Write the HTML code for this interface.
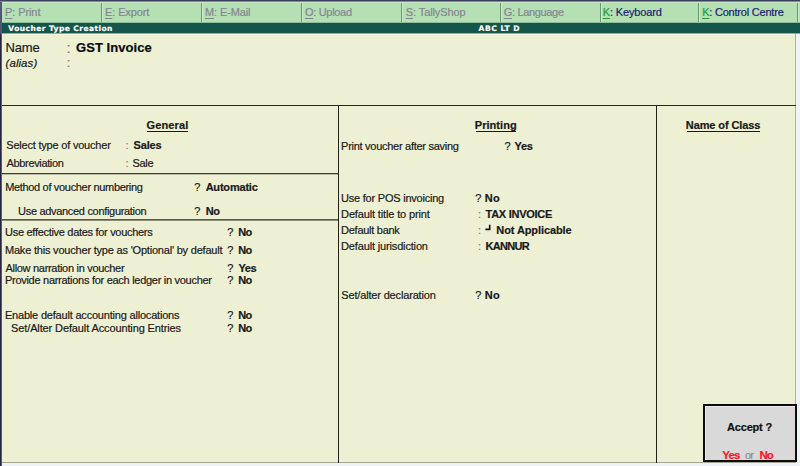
<!DOCTYPE html>
<html>
<head>
<meta charset="utf-8">
<title>Voucher Type Creation</title>
<style>
html,body{margin:0;padding:0;}
body{width:800px;height:466px;overflow:hidden;position:relative;background:#eef0d4;font-family:"Liberation Sans",Arial,sans-serif;font-size:11px;color:#1a1a1a;}
.abs{position:absolute;}
.t{position:absolute;white-space:nowrap;line-height:14px;height:14px;-webkit-text-stroke:0.2px;}
.c{color:#80807a;}
.k{text-decoration:underline;text-underline-offset:2px;}
.kg{color:#2e9a2e;}
.ul{position:absolute;height:1px;background:#1a1a1a;}
.hl{position:absolute;height:1px;background:#2a2a16;}
.vl{position:absolute;width:1px;background:#222218;}
#toolbar{left:2px;top:2px;width:798px;height:21px;background:#b4e0b4;}
#toolbar .hi{position:absolute;left:0;top:0;width:798px;height:1px;background:#c6eac6;}
#toolbar .lo{position:absolute;left:0;top:20px;width:798px;height:1px;background:#7aa48a;}
.sep{position:absolute;top:1px;height:20px;width:1px;background:#6a9a70;}
.sep:after{content:"";position:absolute;left:1px;top:0;width:1px;height:20px;background:#c8ecc8;}
#titlebar{left:2px;top:23px;width:798px;height:10px;background:#14574a;}
#tb-top{left:2px;top:22px;width:798px;height:1px;background:#8fbc9c;}
#tb-bot{left:2px;top:33px;width:798px;height:1px;background:#8fae98;}
#tb-hi{left:2px;top:34px;width:794px;height:1px;background:#f6f4dc;}
#topedge{left:0;top:0;width:800px;height:1px;background:#3f3f5e;}
#topedge2{left:0;top:1px;width:800px;height:1px;background:#7c8a96;}
#leftedge{left:0;top:0;width:1px;height:466px;background:#262643;}
#leftedge2{left:1px;top:0;width:1px;height:466px;background:#5a5a6e;}
#leftedge-top{left:0;top:0;width:2px;height:34px;background:#55557a;}
#rightline{left:795px;top:34px;width:1px;height:429px;background:#aab0a6;}
#rightedge{left:796px;top:34px;width:4px;height:432px;background:#eef3f6;}
#bottomline{left:2px;top:462px;width:794px;height:1px;background:#a4a693;}
#bottomedge{left:2px;top:463px;width:798px;height:3px;background:#eef3f6;}
#accept{left:703px;top:404px;width:90px;height:54px;border:2px solid #0c0c0c;background:#d9d9d9;box-shadow:inset 1px 1px 0 #ececec;}
.tick{position:absolute;background:#1a1a1a;}
</style>
</head>
<body>
<!-- toolbar -->
<div class="abs" id="toolbar">
  <div class="hi"></div><div class="lo"></div>
  <div class="sep" style="left:99px"></div>
  <div class="sep" style="left:199px"></div>
  <div class="sep" style="left:299px"></div>
  <div class="sep" style="left:399px"></div>
  <div class="sep" style="left:498px"></div>
  <div class="sep" style="left:598px"></div>
  <div class="sep" style="left:696px"></div>
  <div class="sep" style="left:795px"></div>
</div>
<div class="abs" id="tb-top"></div>
<div class="abs" id="titlebar"></div>
<div class="abs" id="tb-bot"></div>
<div class="abs" id="tb-hi"></div>

<!-- window edges -->
<div class="abs" id="rightedge"></div>
<div class="abs" id="rightline"></div>
<div class="abs" id="bottomedge"></div>
<div class="abs" id="bottomline"></div>
<div class="abs" id="leftedge"></div>
<div class="abs" id="leftedge2"></div>
<div class="abs" id="leftedge-top"></div>
<div class="abs" id="topedge"></div>
<div class="abs" id="topedge2"></div>

<!-- panel lines -->
<div class="hl" style="left:2px;top:105px;width:794px"></div>
<div class="vl" style="left:338px;top:105px;height:358px"></div>
<div class="vl" style="left:656px;top:105px;height:358px"></div>
<div class="hl" style="left:2px;top:173px;width:336px;background:#3c3c30"></div>
<div class="hl" style="left:2px;top:174px;width:336px;background:#b9bba2"></div>
<div class="hl" style="left:2px;top:219px;width:336px;background:#5a5a48"></div>
<div class="hl" style="left:2px;top:220px;width:336px;background:#8c8d78"></div>

<!-- colons -->
<div class="t c" style="left:66.4px;top:41px;font-size:15px">:</div>
<div class="t c" style="left:66.7px;top:56px;font-size:13px">:</div>
<div class="t c" style="left:125.5px;top:138px">:</div>
<div class="t c" style="left:125.5px;top:156px">:</div>
<div class="t c" style="left:478px;top:207px">:</div>
<div class="t c" style="left:478px;top:223px">:</div>
<div class="t c" style="left:478px;top:239px">:</div>

<!-- end-of-list marker before Not Applicable -->
<svg class="abs" style="left:484px;top:223px" width="8" height="8" viewBox="0 0 8 8"><path d="M5.7 1.7 V6.4 H1.4" stroke="#111" stroke-width="1.6" fill="none"/></svg>

<!-- accept box -->
<div class="abs" id="accept"></div>

<div class="t" style="left:5.48px;top:41px;font-size:13px;letter-spacing:-0.169px;">Name</div>
<div class="t" style="left:76.03px;top:41px;font-size:13px;font-weight:bold;color:#0a0a0a;letter-spacing:0.057px;">GST Invoice</div>
<div class="t" style="left:5.54px;top:56px;font-size:11.5px;font-style:italic;letter-spacing:0.063px;">(alias)</div>
<div class="t" style="left:146.60px;top:118px;font-size:11px;font-weight:bold;letter-spacing:0.118px;">General</div>
<div class="ul" style="left:147.0px;top:131px;width:40.5px"></div>
<div class="t" style="left:6.25px;top:138px;font-size:11px;letter-spacing:-0.204px;">Select type of voucher</div>
<div class="t" style="left:133.54px;top:138px;font-size:11px;font-weight:bold;letter-spacing:-0.160px;">Sales</div>
<div class="t" style="left:6.61px;top:156px;font-size:11px;letter-spacing:-0.361px;">Abbreviation</div>
<div class="t" style="left:132.54px;top:156px;font-size:11px;letter-spacing:-0.314px;">Sale</div>
<div class="t" style="left:5.14px;top:180px;font-size:11px;letter-spacing:-0.323px;">Method of voucher numbering</div>
<div class="t" style="left:194.24px;top:180px;font-size:11px;">?</div>
<div class="t" style="left:205.64px;top:180px;font-size:11px;font-weight:bold;letter-spacing:-0.197px;">Automatic</div>
<div class="t" style="left:18.10px;top:204px;font-size:11px;letter-spacing:-0.313px;">Use advanced configuration</div>
<div class="t" style="left:194.24px;top:204px;font-size:11px;">?</div>
<div class="t" style="left:205.78px;top:204px;font-size:11px;font-weight:bold;letter-spacing:-0.510px;">No</div>
<div class="t" style="left:5.10px;top:225px;font-size:11px;letter-spacing:-0.301px;">Use effective dates for vouchers</div>
<div class="t" style="left:227.23px;top:225px;font-size:11px;">?</div>
<div class="t" style="left:238.21px;top:225px;font-size:11px;font-weight:bold;letter-spacing:-0.608px;">No</div>
<div class="t" style="left:4.97px;top:243px;font-size:11px;letter-spacing:-0.199px;">Make this voucher type as 'Optional' by default</div>
<div class="t" style="left:227.23px;top:243px;font-size:11px;">?</div>
<div class="t" style="left:238.21px;top:243px;font-size:11px;font-weight:bold;letter-spacing:-0.608px;">No</div>
<div class="t" style="left:5.46px;top:261px;font-size:11px;letter-spacing:-0.299px;">Allow narration in voucher</div>
<div class="t" style="left:227.23px;top:261px;font-size:11px;">?</div>
<div class="t" style="left:238.57px;top:261px;font-size:11px;font-weight:bold;letter-spacing:-0.514px;">Yes</div>
<div class="t" style="left:4.97px;top:273px;font-size:11px;letter-spacing:-0.284px;">Provide narrations for each ledger in voucher</div>
<div class="t" style="left:227.23px;top:273px;font-size:11px;">?</div>
<div class="t" style="left:238.21px;top:273px;font-size:11px;font-weight:bold;letter-spacing:-0.608px;">No</div>
<div class="t" style="left:4.97px;top:308px;font-size:11px;letter-spacing:-0.196px;">Enable default accounting allocations</div>
<div class="t" style="left:227.23px;top:308px;font-size:11px;">?</div>
<div class="t" style="left:238.21px;top:308px;font-size:11px;font-weight:bold;letter-spacing:-0.608px;">No</div>
<div class="t" style="left:11.06px;top:321px;font-size:11px;letter-spacing:-0.121px;">Set/Alter Default Accounting Entries</div>
<div class="t" style="left:227.23px;top:321px;font-size:11px;">?</div>
<div class="t" style="left:238.21px;top:321px;font-size:11px;font-weight:bold;letter-spacing:-0.608px;">No</div>
<div class="t" style="left:474.83px;top:118px;font-size:11px;font-weight:bold;letter-spacing:0.032px;">Printing</div>
<div class="ul" style="left:475.8px;top:131px;width:40.2px"></div>
<div class="t" style="left:341.11px;top:139px;font-size:11px;letter-spacing:-0.278px;">Print voucher after saving</div>
<div class="t" style="left:504.57px;top:139px;font-size:11px;">?</div>
<div class="t" style="left:514.57px;top:139px;font-size:11px;font-weight:bold;letter-spacing:-0.322px;">Yes</div>
<div class="t" style="left:341.06px;top:191px;font-size:11px;letter-spacing:-0.223px;">Use for POS invoicing</div>
<div class="t" style="left:475.24px;top:191px;font-size:11px;">?</div>
<div class="t" style="left:484.83px;top:191px;font-size:11px;font-weight:bold;letter-spacing:0.212px;">No</div>
<div class="t" style="left:341.08px;top:207px;font-size:11px;letter-spacing:-0.144px;">Default title to print</div>
<div class="t" style="left:485.60px;top:207px;font-size:11px;font-weight:bold;letter-spacing:-0.284px;">TAX INVOICE</div>
<div class="t" style="left:341.08px;top:223px;font-size:11px;letter-spacing:-0.270px;">Default bank</div>
<div class="t" style="left:496.29px;top:223px;font-size:11px;font-weight:bold;letter-spacing:-0.093px;">Not Applicable</div>
<div class="t" style="left:341.08px;top:239px;font-size:11px;letter-spacing:-0.156px;">Default jurisdiction</div>
<div class="t" style="left:485.61px;top:239px;font-size:11px;font-weight:bold;letter-spacing:-0.734px;">KANNUR</div>
<div class="t" style="left:341.25px;top:288px;font-size:11px;letter-spacing:-0.161px;">Set/alter declaration</div>
<div class="t" style="left:475.24px;top:288px;font-size:11px;">?</div>
<div class="t" style="left:484.83px;top:288px;font-size:11px;font-weight:bold;letter-spacing:0.157px;">No</div>
<div class="t" style="left:685.83px;top:118px;font-size:11px;font-weight:bold;letter-spacing:-0.111px;">Name of Class</div>
<div class="ul" style="left:686.8px;top:131px;width:73.0px"></div>
<div class="t" style="left:727.09px;top:420px;font-size:11px;font-weight:bold;color:#111;letter-spacing:-0.197px;">Accept ?</div>
<div class="t" style="left:722.29px;top:448px;font-size:11.5px;font-weight:bold;color:#ff1526;letter-spacing:-0.825px;">Yes</div>
<div class="t" style="left:744.92px;top:448px;font-size:11px;color:#8c8c8c;letter-spacing:-0.816px;">or</div>
<div class="t" style="left:759.57px;top:448px;font-size:11.5px;font-weight:bold;color:#ff1526;letter-spacing:-1.141px;">No</div>
<div class="t" style="left:5.11px;top:5px;font-size:11px;color:#858592;letter-spacing:-0.105px;"><span class="k">P</span>: Print</div>
<div class="t" style="left:104.97px;top:5px;font-size:11px;color:#858592;letter-spacing:-0.100px;"><span class="k">E</span>: Export</div>
<div class="t" style="left:204.97px;top:5px;font-size:11px;color:#858592;letter-spacing:-0.110px;"><span class="k">M</span>: E-Mail</div>
<div class="t" style="left:304.94px;top:5px;font-size:11px;color:#858592;letter-spacing:-0.305px;"><span class="k">O</span>: Upload</div>
<div class="t" style="left:405.76px;top:5px;font-size:11px;color:#858592;letter-spacing:-0.091px;"><span class="k">S</span>: TallyShop</div>
<div class="t" style="left:503.76px;top:5px;font-size:11px;color:#858592;letter-spacing:-0.336px;"><span class="k">G</span>: Language</div>
<div class="t" style="left:602.80px;top:5px;font-size:11px;color:#1c2070;letter-spacing:-0.159px;"><span class="k kg">K</span>: Keyboard</div>
<div class="t" style="left:702.14px;top:5px;font-size:11px;color:#1c2070;letter-spacing:-0.208px;"><span class="k kg">K</span>: Control Centre</div>
<div class="t" style="left:8.37px;top:22px;font-size:7.5px;font-weight:bold;color:#ffffff;letter-spacing:0.441px;font-family:'DejaVu Sans','Liberation Sans',sans-serif;">Voucher Type Creation</div>
<div class="t" style="left:478.57px;top:22px;font-size:7.5px;font-weight:bold;color:#ffffff;letter-spacing:0.547px;font-family:'DejaVu Sans','Liberation Sans',sans-serif;">ABC LT D</div>
</body>
</html>
